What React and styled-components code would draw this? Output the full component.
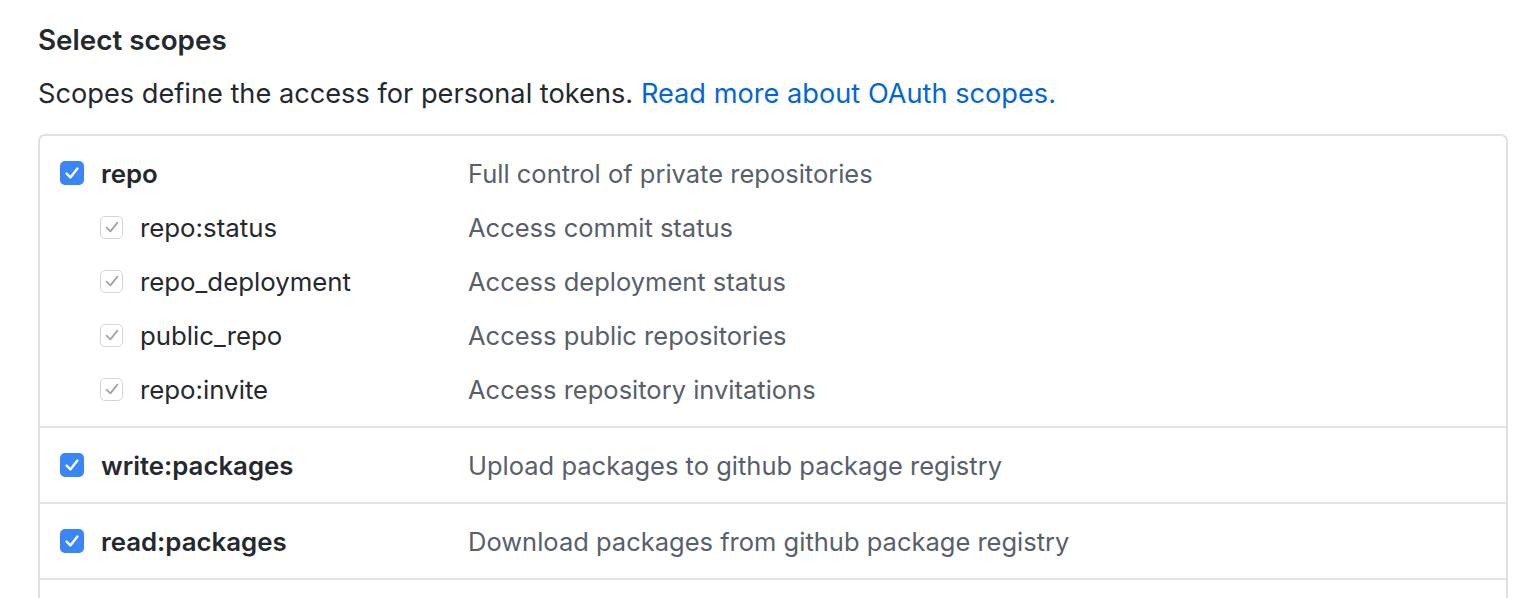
import React from "react";
import styled, { createGlobalStyle } from "styled-components";

const Global = createGlobalStyle`
  html, body { margin: 0; padding: 0; background: #fff; overflow: hidden; }
  body { font-family: Inter, "Noto Sans", "Liberation Sans", sans-serif; color: #24292e; }
`;

const Page = styled.div`
  padding: 20px 18px 0 38px;
  width: 1470px;
`;

const Heading = styled.h3`
  margin: 0;
  font-size: 27.8px;
  font-weight: 600;
  line-height: 40px;
  color: #24292e;
`;

const Lead = styled.p`
  margin: 14px 0 0;
  font-size: 27.2px;
  line-height: 40px;
  color: #24292e;
`;

const Link = styled.a`
  color: #0366d6;
  text-decoration: none;
`;

const Box = styled.div`
  margin-top: 20px;
  border: 2px solid #e1e1e1;
  border-bottom: none;
  border-radius: 7px 7px 0 0;
  height: 600px;
`;

const Group = styled.div`
  padding: 10px 0;
  border-bottom: 2px solid #e1e4e8;
`;

const Line = styled.div`
  display: flex;
  align-items: center;
  height: 54px;
  padding-left: ${(p) => (p.$sub ? 60 : 20)}px;
`;

const LabelCol = styled.label`
  display: flex;
  align-items: center;
  gap: 17px;
  width: ${(p) => (p.$sub ? 368 : 408)}px;
  font-size: 25.8px;
  font-weight: ${(p) => (p.$sub ? 400 : 600)};
  color: #24292e;
`;

const Desc = styled.span`
  font-size: 25.5px;
  color: #586069;
`;

const Check = styled.span`
  display: inline-flex;
  align-items: center;
  justify-content: center;
  box-sizing: border-box;
  flex: none;
  width: ${(p) => (p.$sub ? 23 : 24)}px;
  height: ${(p) => (p.$sub ? 23 : 24)}px;
  border-radius: 5px;
  background: ${(p) => (p.$sub ? "#fff" : "#3b86f6")};
  border: ${(p) => (p.$sub ? "1px solid #d6d6d6" : "none")};
  svg { display: block; }
`;

function CheckBox({ sub }) {
  return (
    <Check $sub={sub}>
      <svg width="18" height="18" viewBox="0 0 18 18">
        <polyline
          points="3.6,9.6 7.4,13.4 14.4,4.6"
          fill="none"
          stroke={sub ? "#a3a3a3" : "#fff"}
          strokeWidth={sub ? 1.8 : 2.4}
          strokeLinecap="round"
          strokeLinejoin="round"
        />
      </svg>
    </Check>
  );
}

function Row({ name, desc, sub }) {
  return (
    <Line $sub={sub}>
      <LabelCol $sub={sub}>
        <CheckBox sub={sub} />
        {name}
      </LabelCol>
      <Desc>{desc}</Desc>
    </Line>
  );
}

const groups = [
  {
    name: "repo",
    desc: "Full control of private repositories",
    subs: [
      ["repo:status", "Access commit status"],
      ["repo_deployment", "Access deployment status"],
      ["public_repo", "Access public repositories"],
      ["repo:invite", "Access repository invitations"],
    ],
  },
  { name: "write:packages", desc: "Upload packages to github package registry", subs: [] },
  { name: "read:packages", desc: "Download packages from github package registry", subs: [] },
];

export default function App() {
  return (
    <>
      <Global />
      <Page>
        <Heading>Select scopes</Heading>
        <Lead>
          Scopes define the access for personal tokens.{" "}
          <Link href="#">Read more about OAuth scopes.</Link>
        </Lead>
        <Box>
          {groups.map((g) => (
            <Group key={g.name}>
              <Row name={g.name} desc={g.desc} />
              {g.subs.map(([n, d]) => (
                <Row key={n} name={n} desc={d} sub />
              ))}
            </Group>
          ))}
        </Box>
      </Page>
    </>
  );
}
